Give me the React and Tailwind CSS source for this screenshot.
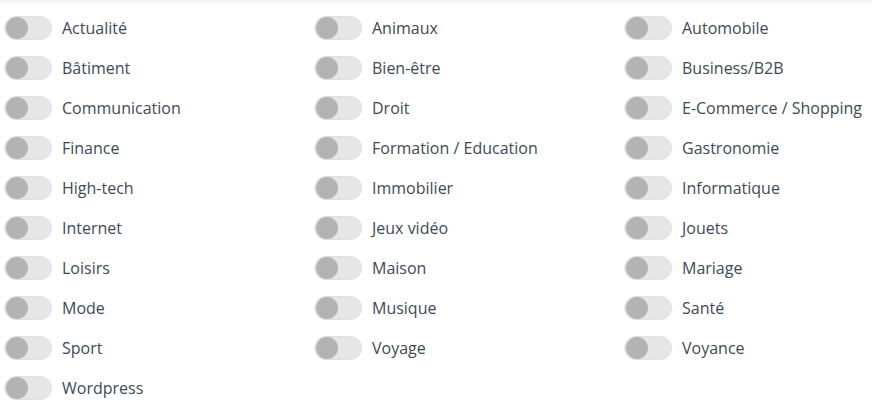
import React from 'react';

const columns = [
  ['Actualité', 'Bâtiment', 'Communication', 'Finance', 'High-tech', 'Internet', 'Loisirs', 'Mode', 'Sport', 'Wordpress'],
  ['Animaux', 'Bien-être', 'Droit', 'Formation / Education', 'Immobilier', 'Jeux vidéo', 'Maison', 'Musique', 'Voyage'],
  ['Automobile', 'Business/B2B', 'E-Commerce / Shopping', 'Gastronomie', 'Informatique', 'Jouets', 'Mariage', 'Santé', 'Voyance'],
];

function Toggle({ label }) {
  return (
    <label className="flex items-center h-10 cursor-pointer">
      <span className="relative w-12 h-6 rounded-full bg-[#e6e6e6] border border-[#e0e0e0] shrink-0">
        <span className="absolute left-[1px] top-[0px] w-[22px] h-[22px] rounded-full bg-[#b3b3b3]" />
      </span>
      <span className="ml-[10px] text-[16px] text-[#3e4a56] whitespace-nowrap">{label}</span>
    </label>
  );
}

export default function App() {
  return (
    <div className="w-[872px] h-[419px] bg-white overflow-hidden relative font-['Open_Sans',sans-serif]">
      <div className="absolute inset-x-0 top-0 h-[6px] bg-gradient-to-b from-black/5 to-transparent" />
      <div className="grid grid-cols-[310px_310px_252px] pt-2 pl-1">
        {columns.map((col, i) => (
          <div key={i} className="flex flex-col">
            {col.map((item) => (
              <Toggle key={item} label={item} />
            ))}
          </div>
        ))}
      </div>
    </div>
  );
}
